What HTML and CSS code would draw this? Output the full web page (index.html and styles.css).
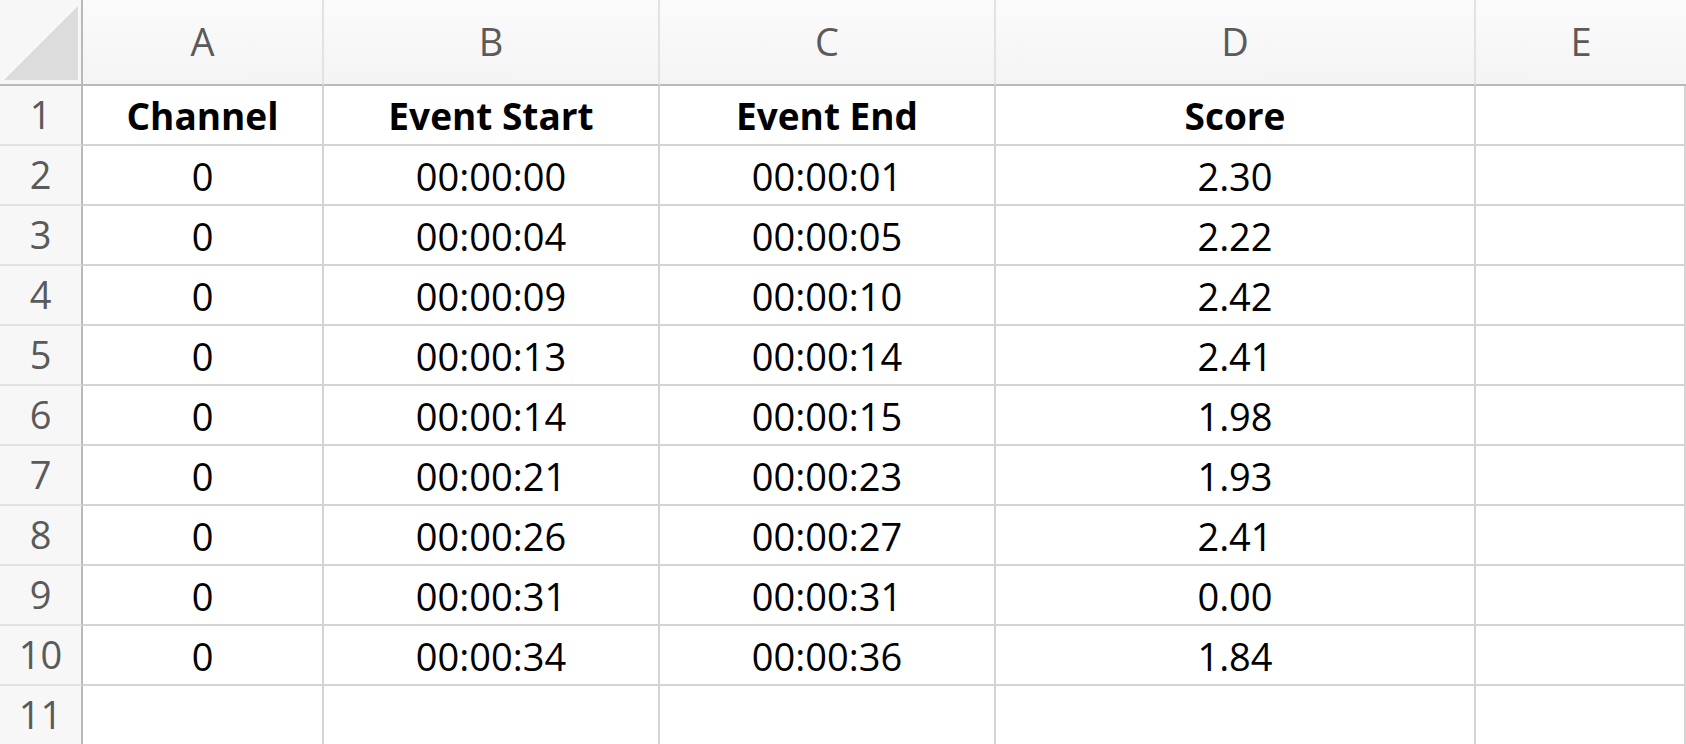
FILE: index.html
```html
<!DOCTYPE html>
<html lang="en">
<head>
<meta charset="utf-8">
<title>Sheet</title>
<link rel="stylesheet" href="styles.css">
</head>
<body>
<div class="sheet">
  <div class="corner"><svg class="tri" width="76" height="76" viewBox="0 0 76 76"><polygon points="75,1 75,75 1,75" fill="#dcdcdc"/></svg></div>
  <div class="colhead">A</div>
  <div class="colhead">B</div>
  <div class="colhead">C</div>
  <div class="colhead">D</div>
  <div class="colhead last">E</div>

  <div class="rowhead">1</div>
  <div class="cell bold">Channel</div>
  <div class="cell bold">Event Start</div>
  <div class="cell bold">Event End</div>
  <div class="cell bold">Score</div>
  <div class="cell"></div>

  <div class="rowhead">2</div>
  <div class="cell">0</div>
  <div class="cell">00:00:00</div>
  <div class="cell">00:00:01</div>
  <div class="cell">2.30</div>
  <div class="cell"></div>

  <div class="rowhead">3</div>
  <div class="cell">0</div>
  <div class="cell">00:00:04</div>
  <div class="cell">00:00:05</div>
  <div class="cell">2.22</div>
  <div class="cell"></div>

  <div class="rowhead">4</div>
  <div class="cell">0</div>
  <div class="cell">00:00:09</div>
  <div class="cell">00:00:10</div>
  <div class="cell">2.42</div>
  <div class="cell"></div>

  <div class="rowhead">5</div>
  <div class="cell">0</div>
  <div class="cell">00:00:13</div>
  <div class="cell">00:00:14</div>
  <div class="cell">2.41</div>
  <div class="cell"></div>

  <div class="rowhead">6</div>
  <div class="cell">0</div>
  <div class="cell">00:00:14</div>
  <div class="cell">00:00:15</div>
  <div class="cell">1.98</div>
  <div class="cell"></div>

  <div class="rowhead">7</div>
  <div class="cell">0</div>
  <div class="cell">00:00:21</div>
  <div class="cell">00:00:23</div>
  <div class="cell">1.93</div>
  <div class="cell"></div>

  <div class="rowhead">8</div>
  <div class="cell">0</div>
  <div class="cell">00:00:26</div>
  <div class="cell">00:00:27</div>
  <div class="cell">2.41</div>
  <div class="cell"></div>

  <div class="rowhead">9</div>
  <div class="cell">0</div>
  <div class="cell">00:00:31</div>
  <div class="cell">00:00:31</div>
  <div class="cell">0.00</div>
  <div class="cell"></div>

  <div class="rowhead">10</div>
  <div class="cell">0</div>
  <div class="cell">00:00:34</div>
  <div class="cell">00:00:36</div>
  <div class="cell">1.84</div>
  <div class="cell"></div>

  <div class="rowhead">11</div>
  <div class="cell"></div>
  <div class="cell"></div>
  <div class="cell"></div>
  <div class="cell"></div>
  <div class="cell"></div>
</div>
</body>
</html>
```

FILE: styles.css
```css
* { box-sizing: border-box; }

html, body {
  margin: 0;
  padding: 0;
  background: #ffffff;
  overflow: hidden;
}

.sheet {
  display: grid;
  grid-template-columns: 83px 241px 336px 336px 480px 210px;
  grid-template-rows: 86px repeat(11, 60px);
  width: 1686px;
  font-family: "Open Sans", "Noto Sans", sans-serif;
}

.corner {
  background: #f7f7f7;
  border-right: 2px solid #b9b9b9;
  border-bottom: 2px solid #b9b9b9;
  display: flex;
  align-items: flex-start;
  justify-content: flex-start;
  padding: 5px 0 0 3px;
}

.tri { display: block; }

.colhead {
  background: linear-gradient(#fbfbfb, #f4f4f4);
  border-right: 2px solid #e2e2e2;
  border-bottom: 2px solid #b9b9b9;
  color: #5a5a5a;
  font-size: 38px;
  display: flex;
  align-items: center;
  justify-content: center;
  padding-bottom: 2px;
}

.colhead.last { border-right: none; }

.rowhead {
  background: #f7f7f7;
  border-right: 2px solid #b9b9b9;
  border-bottom: 2px solid #e1e1e1;
  color: #5a5a5a;
  font-size: 38px;
  display: flex;
  align-items: center;
  justify-content: center;
  padding-bottom: 2px;
}

.cell {
  background: #ffffff;
  border-right: 2px solid #d4d4d4;
  border-bottom: 2px solid #d4d4d4;
  color: #000000;
  font-size: 38px;
  display: flex;
  align-items: center;
  justify-content: center;
  padding-top: 1px;
}

.cell.bold {
  font-size: 37px;
  font-weight: 700;
}
```
